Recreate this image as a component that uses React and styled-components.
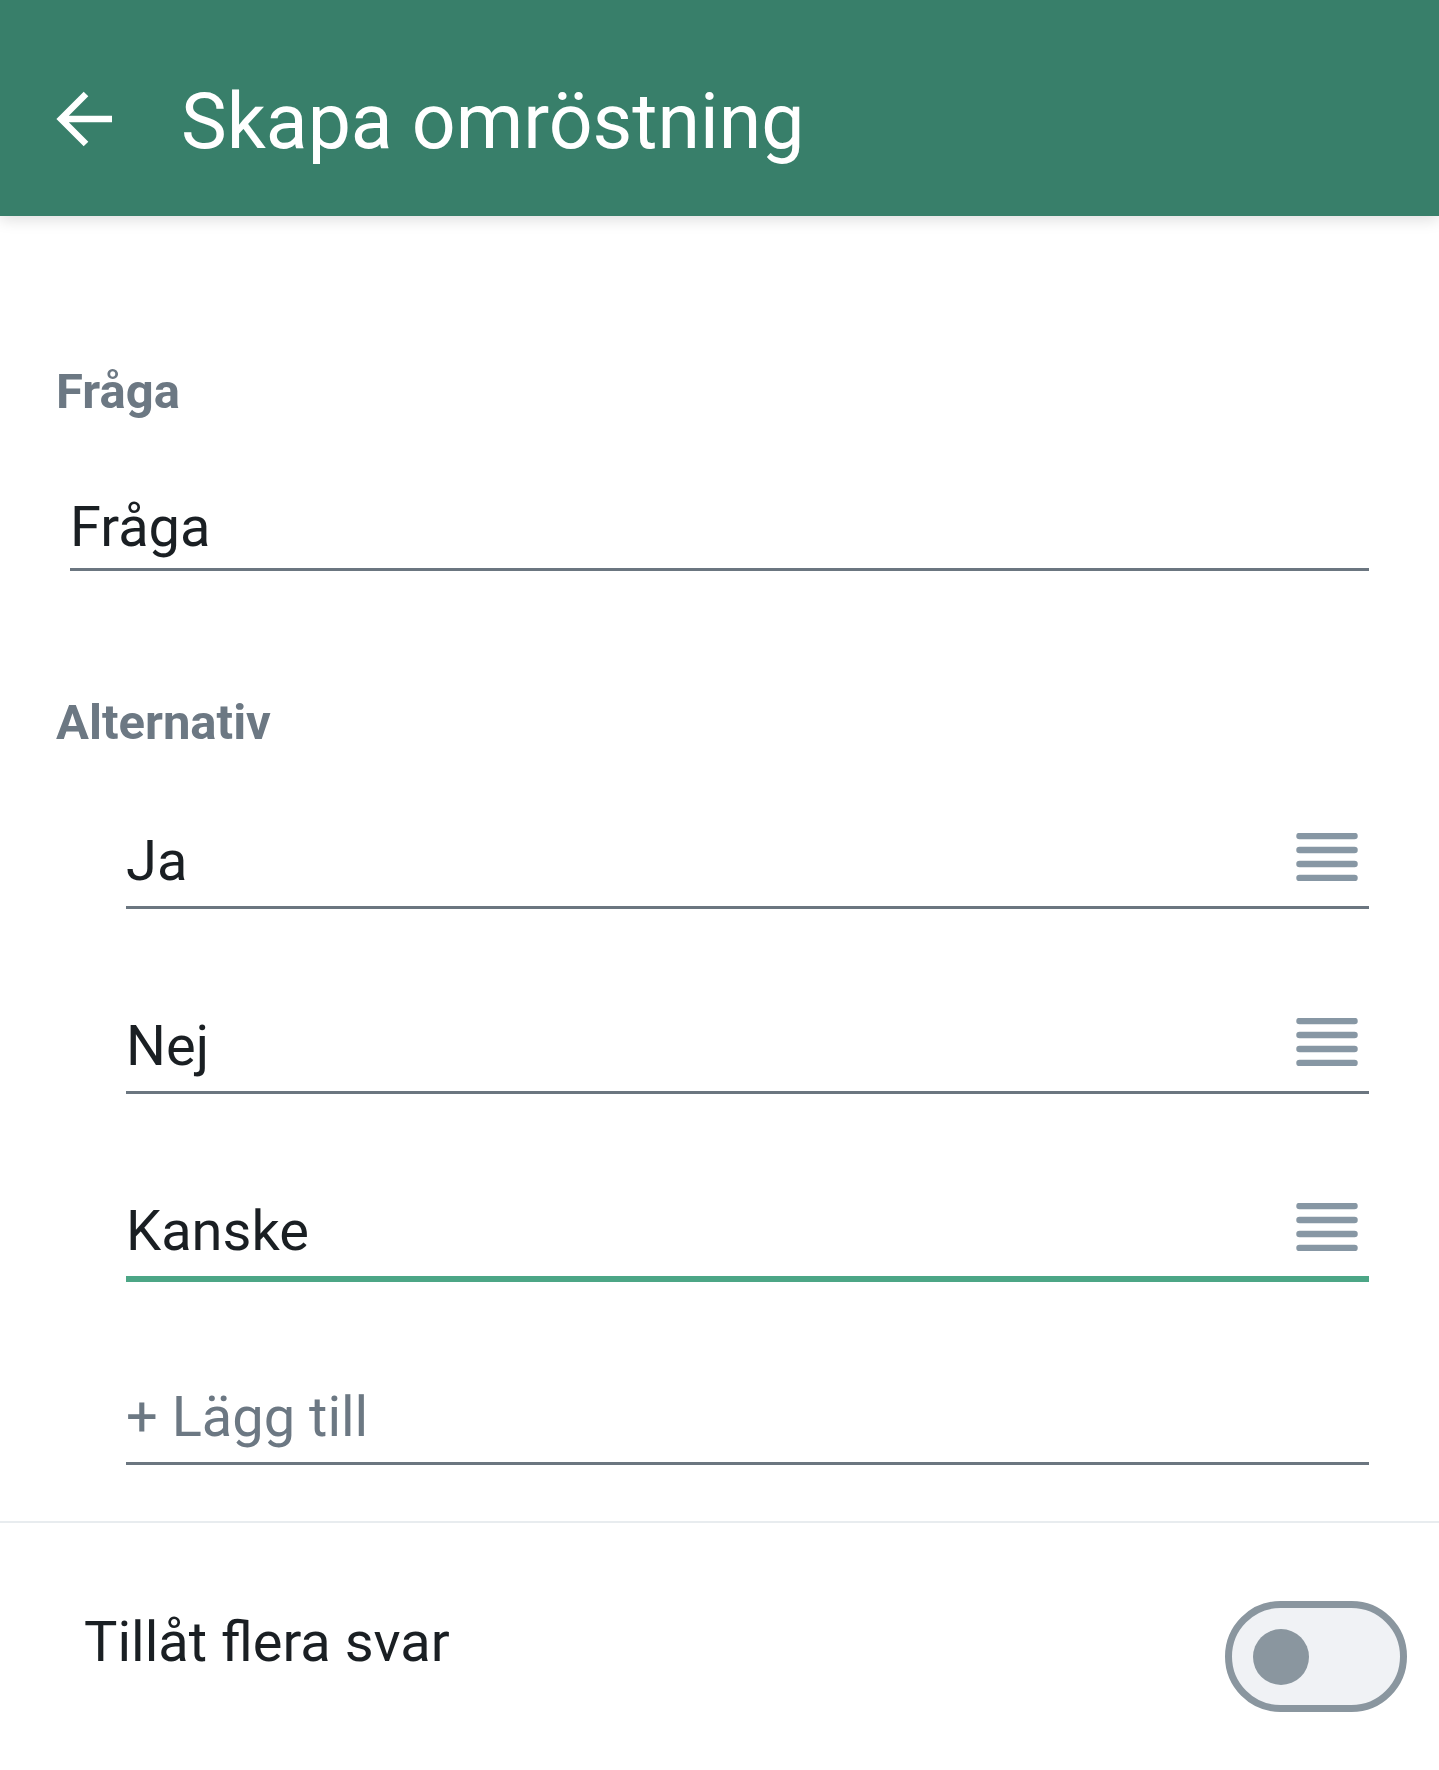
import styled, { createGlobalStyle } from "styled-components";

const GlobalStyle = createGlobalStyle`
  html, body {
    margin: 0;
    padding: 0;
    background: #ffffff;
    font-family: Roboto, "Noto Sans", sans-serif;
  }
`;

const Page = styled.div`
  width: 1439px;
  min-height: 1770px;
  background: #ffffff;
`;

const Header = styled.header`
  position: relative;
  display: flex;
  align-items: flex-start;
  height: 216px;
  box-sizing: border-box;
  padding: 84px 0 0 56px;
  background: #387f6a;
  box-shadow: 0 4px 14px rgba(0, 0, 0, 0.13);
`;

const BackButton = styled.button`
  display: flex;
  margin: 7px 69px 0 0;
  padding: 0;
  border: none;
  background: none;
  cursor: pointer;
`;

const Title = styled.h1`
  margin: 0;
  font-size: 77px;
  line-height: 1;
  font-weight: 400;
  color: #ffffff;
`;

const Content = styled.main`
  padding: 0 70px 0 56px;
`;

const SectionLabel = styled.div`
  margin-top: ${(p) => p.$top}px;
  font-size: 49px;
  line-height: 1;
  font-weight: 700;
  color: #6c7883;
`;

const Field = styled.div`
  display: flex;
  align-items: flex-start;
  justify-content: space-between;
  margin: ${(p) => p.$top}px 0 0 ${(p) => (p.$indent ? 70 : 14)}px;
  padding-bottom: ${(p) => p.$pad}px;
  border-bottom: ${(p) => (p.$focused ? "6px solid #4ca686" : "3px solid #6b7680")};
  font-size: 56px;
  line-height: 1;
  color: ${(p) => (p.$placeholder ? "#6c7883" : "#1a1f23")};
`;

const Handle = styled.svg`
  flex-shrink: 0;
  margin-right: 11px;
`;

const Divider = styled.hr`
  margin: 56px 0 0;
  border: none;
  height: 2px;
  background: #e8ecef;
`;

const SettingRow = styled.div`
  display: flex;
  align-items: flex-start;
  justify-content: space-between;
  padding: 78px 32px 0 84px;
`;

const SettingText = styled.span`
  margin-top: 13px;
  font-size: 56px;
  line-height: 1;
  color: #1a1f23;
`;

const Toggle = styled.div`
  display: flex;
  align-items: center;
  width: 182px;
  height: 111px;
  box-sizing: border-box;
  padding-left: 21px;
  border: 7px solid #8a969f;
  border-radius: 56px;
  background: #f0f2f5;
`;

const Knob = styled.div`
  width: 56px;
  height: 56px;
  border-radius: 50%;
  background: #8a969f;
`;

const ArrowBack = () => (
  <svg width="56" height="56" viewBox="0 0 56 56" fill="none">
    <path
      d="M56 28H6M30 3L5 28L30 53"
      stroke="#ffffff"
      strokeWidth="6.5"
      strokeLinejoin="miter"
    />
  </svg>
);

const DragHandle = () => (
  <Handle width="62" height="48" viewBox="0 0 62 48">
    {[3, 17, 31, 45].map((y) => (
      <line
        key={y}
        x1="3.5"
        x2="58.5"
        y1={y}
        y2={y}
        stroke="#8797a4"
        strokeWidth="6.5"
        strokeLinecap="round"
      />
    ))}
  </Handle>
);

const options = ["Ja", "Nej", "Kanske"];

export default function App() {
  return (
    <Page>
      <GlobalStyle />
      <Header>
        <BackButton aria-label="Tillbaka">
          <ArrowBack />
        </BackButton>
        <Title>Skapa omröstning</Title>
      </Header>
      <Content>
        <SectionLabel $top={151}>Fråga</SectionLabel>
        <Field $top={83} $pad={13}>
          Fråga
        </Field>
        <SectionLabel $top={127}>Alternativ</SectionLabel>
        {options.map((opt, i) => (
          <Field
            key={opt}
            $indent
            $top={i === 0 ? 86 : 109}
            $pad={17}
            $focused={i === options.length - 1}
          >
            {opt}
            <DragHandle />
          </Field>
        ))}
        <Field $indent $placeholder $top={107} $pad={17}>
          + Lägg till
        </Field>
      </Content>
      <Divider />
      <SettingRow>
        <SettingText>Tillåt flera svar</SettingText>
        <Toggle>
          <Knob />
        </Toggle>
      </SettingRow>
    </Page>
  );
}
